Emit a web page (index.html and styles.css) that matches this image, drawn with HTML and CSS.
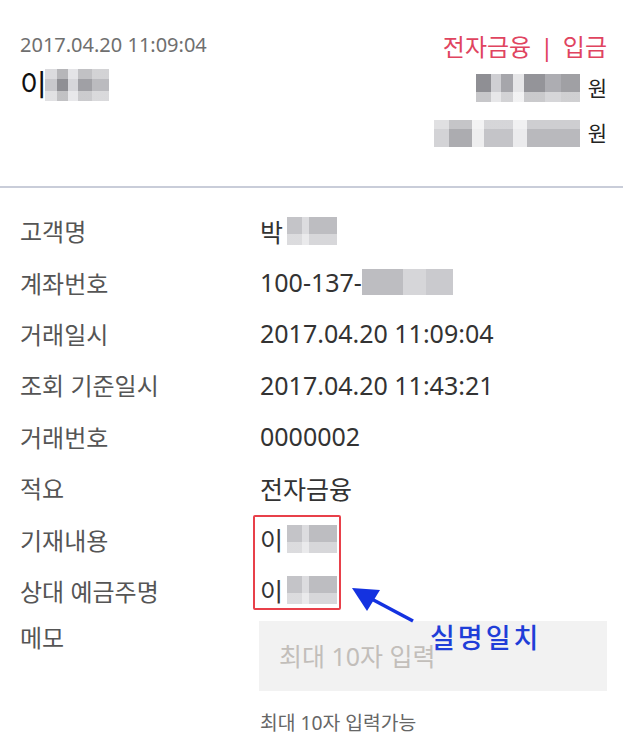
FILE: index.html
```html
<!DOCTYPE html>
<html lang="ko">
<head>
    <meta charset="UTF-8">
    <meta name="viewport" content="width=device-width, initial-scale=1.0">
    <title>거래내역 상세</title>
    <link rel="stylesheet" href="styles.css">
</head>
<body>
    <header class="summary">
        <div class="summary-left">
            <div class="summary-date">2017.04.20 11:09:04</div>
            <div class="summary-name">이<span class="blur blur-name"></span></div>
        </div>
        <div class="summary-right">
            <div class="summary-type">전자금융 <span class="bar">|</span> 입금</div>
            <div class="summary-amount"><span class="blur blur-amount"></span> 원</div>
            <div class="summary-balance"><span class="blur blur-balance"></span> 원</div>
        </div>
    </header>

    <main class="detail">
        <div class="row">
            <div class="label">고객명</div>
            <div class="value">박<span class="blur blur-short"></span></div>
        </div>
        <div class="row">
            <div class="label">계좌번호</div>
            <div class="value">100-137-<span class="blur blur-account"></span></div>
        </div>
        <div class="row">
            <div class="label">거래일시</div>
            <div class="value">2017.04.20 11:09:04</div>
        </div>
        <div class="row">
            <div class="label">조회 기준일시</div>
            <div class="value">2017.04.20 11:43:21</div>
        </div>
        <div class="row">
            <div class="label">거래번호</div>
            <div class="value">0000002</div>
        </div>
        <div class="row">
            <div class="label">적요</div>
            <div class="value">전자금융</div>
        </div>
        <div class="row">
            <div class="label">기재내용</div>
            <div class="value">이<span class="blur blur-short"></span></div>
        </div>
        <div class="row">
            <div class="label">상대 예금주명</div>
            <div class="value">이<span class="blur blur-short"></span></div>
        </div>
        <div class="row row-memo">
            <div class="label">메모</div>
            <div class="memo">
                <input class="memo-input" type="text" placeholder="최대 10자 입력">
                <p class="memo-help">최대 10자 입력가능</p>
            </div>
        </div>

        <!-- annotation -->
        <div class="mark-box"></div>
        <svg class="mark-arrow" width="80" height="50" viewBox="0 0 80 50">
            <line x1="63" y1="35" x2="16" y2="10" stroke="#1432e0" stroke-width="3.5"/>
            <polygon points="2,2 30,4 17,25" fill="#1432e0"/>
        </svg>
        <div class="mark-label">실명일치</div>
    </main>
</body>
</html>
```

FILE: styles.css
```css
body {
    margin: 0;
    background: #fff;
    font-family: "Noto Sans", "Noto Sans CJK KR", sans-serif;
    color: #333;
}
.summary {
    display: flex;
    justify-content: space-between;
    padding: 31px 16px 0 20px;
    height: 155px;
    border-bottom: 2px solid #c9cdd9;
}
.summary-date {
    font-size: 20px;
    line-height: 28px;
    color: #6f6f6f;
}
.summary-name {
    margin-top: 6px;
    font-size: 29px;
    line-height: 40px;
    color: #111;
    display: flex;
    align-items: center;
}
.summary-right {
    text-align: right;
}
.summary-type {
    font-size: 24px;
    line-height: 32px;
    color: #e0445f;
}
.summary-type .bar {
    margin: 0 3px;
}
.summary-amount, .summary-balance {
    font-size: 21px;
    color: #222;
    display: flex;
    justify-content: flex-end;
    align-items: center;
    gap: 8px;
}
.summary-amount {
    margin-top: 10px;
    line-height: 30px;
}
.summary-balance {
    margin-top: 15px;
    line-height: 30px;
}
.blur {
    display: inline-block;
    vertical-align: middle;
    background-color: #d6d6d9;
}
.blur-name {
    width: 64px;
    height: 32px;
    margin-left: -2px;
    background:
        linear-gradient(180deg, rgba(255,255,255,0.35) 0 30%, rgba(255,255,255,0) 30% 70%, rgba(255,255,255,0.45) 70% 100%),
        linear-gradient(90deg, #c8c8cc 0 18%, #8f8f94 18% 36%, #d6d6da 36% 52%, #a0a0a5 52% 74%, #bbbbbf 74% 100%);
}
.blur-amount {
    width: 104px;
    height: 28px;
    background:
        linear-gradient(180deg, rgba(255,255,255,0) 0 65%, rgba(255,255,255,0.5) 65% 100%),
        linear-gradient(90deg, #8f8f94 0 14%, #cfcfd3 14% 24%, #a6a6ab 24% 36%, #e6e6e8 36% 46%, #949499 46% 66%, #adadb2 66% 82%, #a0a0a4 82% 100%);
}
.blur-balance {
    width: 146px;
    height: 27px;
    background:
        linear-gradient(180deg, rgba(255,255,255,0.3) 0 35%, rgba(255,255,255,0) 35% 100%),
        linear-gradient(90deg, #d3d3d6 0 10%, #acacb0 10% 26%, #eeeeef 26% 34%, #c4c4c8 34% 54%, #ebebed 54% 64%, #b9b9bd 64% 100%);
}
.blur-short {
    width: 50px;
    height: 28px;
    margin-left: 4px;
    background:
        linear-gradient(180deg, rgba(255,255,255,0) 0 60%, rgba(255,255,255,0.4) 60% 100%),
        linear-gradient(90deg, #c4c4c8 0 30%, #dcdcdf 30% 45%, #bdbdc1 45% 100%);
}
.blur-account {
    width: 91px;
    height: 26px;
    background:
        linear-gradient(90deg, #bdbdc1 0 45%, #d6d6d9 45% 70%, #cacace 70% 100%);
}
.detail {
    position: relative;
    padding: 17px 16px 0 20px;
}
.row {
    display: flex;
    height: 51.4px;
    align-items: center;
}
.label {
    width: 240px;
    font-size: 24px;
    color: #555;
}
.value {
    font-size: 25px;
    color: #333;
    display: flex;
    align-items: center;
}
.row-memo {
    align-items: flex-start;
    height: auto;
}
.row-memo .label {
    line-height: 44px;
}
.memo {
    flex: 1;
    margin-top: 5px;
    margin-left: -1px;
}
.memo-input {
    display: block;
    box-sizing: border-box;
    width: 100%;
    height: 70px;
    border: none;
    background: #f2f2f2;
    padding: 0 20px;
    font-family: inherit;
    font-size: 25px;
    color: #333;
}
.memo-input::placeholder {
    color: #c2beba;
}
.memo-help {
    margin: 18px 0 0 1px;
    font-size: 19.3px;
    line-height: 28px;
    color: #666;
}
.mark-box {
    position: absolute;
    left: 253px;
    top: 327px;
    width: 84px;
    height: 91px;
    border: 2px solid #e8404a;
    border-radius: 2px;
}
.mark-arrow {
    position: absolute;
    left: 350px;
    top: 398px;
}
.mark-label {
    position: absolute;
    left: 430px;
    top: 433px;
    font-size: 27px;
    line-height: 34px;
    letter-spacing: 3px;
    font-weight: 500;
    color: #1f3ed8;
}
```
